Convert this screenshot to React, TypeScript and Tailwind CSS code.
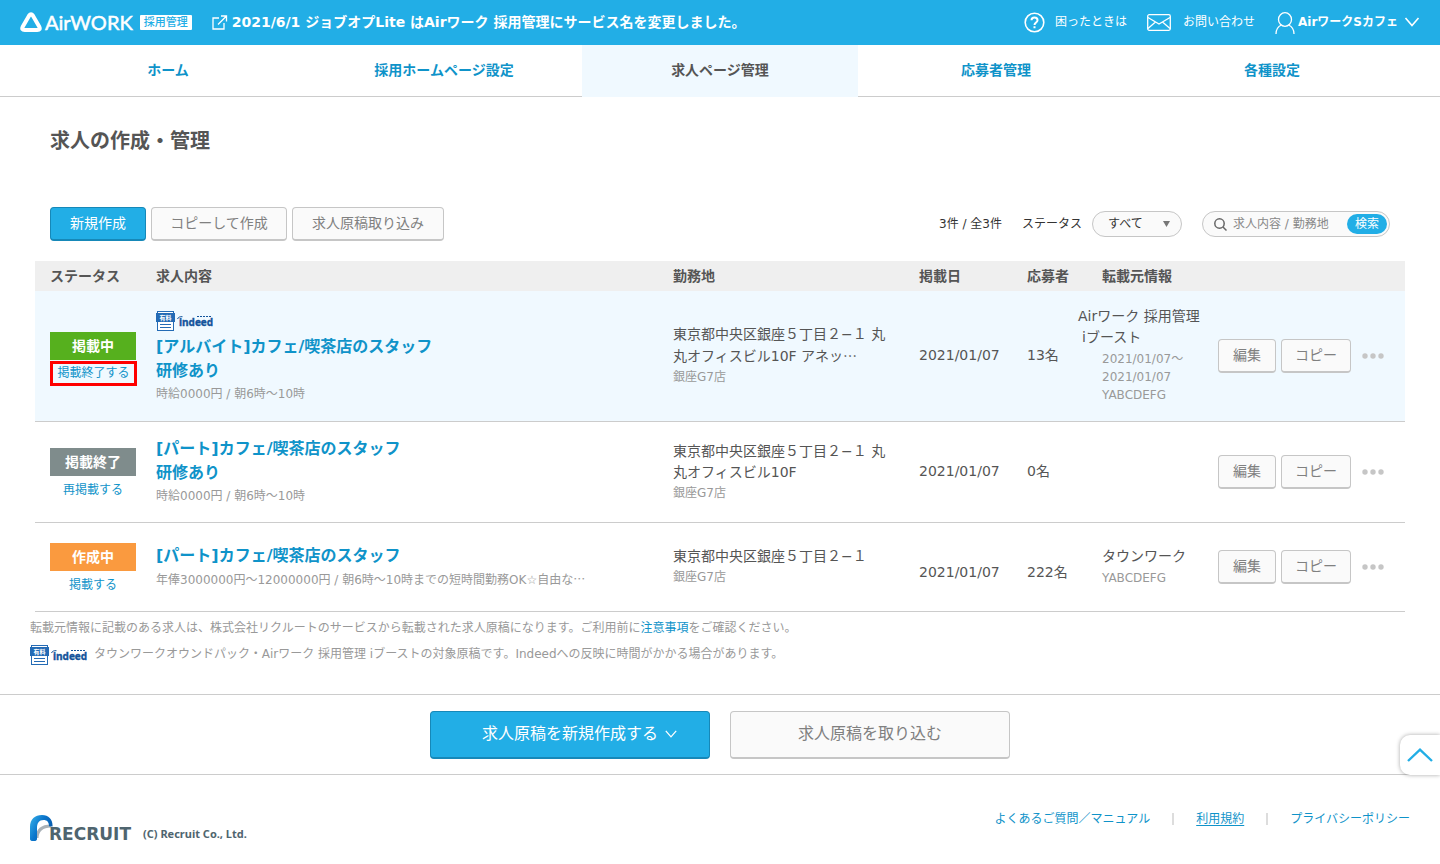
import { clsx } from "clsx";

const navItems = ["ホーム", "採用ホームページ設定", "求人ページ管理", "応募者管理", "各種設定"];

const jobs = [
  {
    id: 1,
    status: "掲載中",
    color: "bg-[#56b01e]",
    action: "掲載終了する",
    highlight: true,
    boosted: true,
    title: ["[アルバイト]カフェ/喫茶店のスタッフ", "研修あり"],
    detail: "時給0000円 / 朝6時～10時",
    address: ["東京都中央区銀座５丁目２−１ 丸", "丸オフィスビル10F アネッ"],
    truncated: true,
    shop: "銀座G7店",
    date: "2021/01/07",
    applicants: "13名",
    source: ["Airワーク 採用管理", "iブースト"],
    sourceInfo: ["2021/01/07～", "2021/01/07", "YABCDEFG"],
  },
  {
    id: 2,
    status: "掲載終了",
    color: "bg-[#7f8c8c]",
    action: "再掲載する",
    title: ["[パート]カフェ/喫茶店のスタッフ", "研修あり"],
    detail: "時給0000円 / 朝6時～10時",
    address: ["東京都中央区銀座５丁目２−１ 丸", "丸オフィスビル10F"],
    shop: "銀座G7店",
    date: "2021/01/07",
    applicants: "0名",
    source: [],
    sourceInfo: [],
  },
  {
    id: 3,
    status: "作成中",
    color: "bg-[#fa9a3f]",
    action: "掲載する",
    title: ["[パート]カフェ/喫茶店のスタッフ"],
    detail: "年俸3000000円～12000000円 / 朝6時～10時までの短時間勤務OK☆自由な",
    detailTruncated: true,
    address: ["東京都中央区銀座５丁目２−１"],
    shop: "銀座G7店",
    date: "2021/01/07",
    applicants: "222名",
    lowered: true,
    source: ["タウンワーク"],
    sourceInfo: ["YABCDEFG"],
  },
];

const grayButton =
  "rounded border border-b-2 border-[#c6c6c6] bg-[#fafafa] pb-px text-[#808080] cursor-pointer";
const blueButton =
  "rounded border border-b-2 border-[#1688b8] bg-[#22aee6] pb-px text-white cursor-pointer";

function Ellipsis() {
  return <span className="font-['Noto_Sans_CJK_JP',sans-serif]">…</span>;
}

function IndeedMark() {
  return (
    <svg className="block shrink-0" width="59" height="20" viewBox="0 0 59 20" role="img" aria-label="有料 indeed">
      <rect x="1.5" y="0.5" width="16" height="19" fill="#fff" stroke="#246bb5" />
      <rect x="0" y="2" width="19" height="9" fill="#246bb5" />
      <text x="9.5" y="9" textAnchor="middle" fontSize="6" fontWeight="700" fill="#fff" fontFamily="Noto Sans CJK JP, sans-serif">有料</text>
      <path d="M4 13.5h11M4 16.5h11" stroke="#246bb5" />
      <path d="M21.5 8c.7-1.800 2.500-2.600 5-2.300" fill="none" stroke="#14549b" />
      <text x="23" y="15" fontSize="10" fontWeight="700" stroke="#14549b" strokeWidth=".4" fill="#14549b" fontFamily="Open Sans, sans-serif">indeed</text>
      <path d="M41 5.5h14" stroke="#14549b" strokeDasharray="2 1" />
    </svg>
  );
}

function Chevron({ className }: { className?: string }) {
  return (
    <svg className={className} width="16" height="10" viewBox="0 0 16 10" fill="none" stroke="currentColor" strokeWidth="1.6">
      <path d="m1.5 1 6.5 7.5L14.5 1" />
    </svg>
  );
}

function Header() {
  return (
    <header className="flex h-[45px] items-center bg-[#22aee6] px-5 pb-px text-white">
      <a href="#" className="flex items-center">
        <svg className="mt-px" width="22" height="21" viewBox="0 0 22 21" fill="none" stroke="currentColor" strokeWidth="4" strokeLinejoin="round">
          <path d="M9.2 3.5Q11 .9 12.8 3.5l6.5 11.3q1.5 3.2-2 3.2H4.7q-3.5 0-2-3.2Z" />
        </svg>
        <span className="ml-[3px] font-[Lato,sans-serif] text-[20px] leading-6 [-webkit-text-stroke:0.5px]">AirWORK</span>
        <span className="ml-[7px] mt-px rounded-[1px] bg-white px-1 text-[11px] leading-[15px] font-medium text-[#22aee6]">採用管理</span>
      </a>
      <a href="#" className="ml-5 flex items-center gap-1 text-sm font-bold">
        <svg width="16" height="15" viewBox="0 0 16 15" fill="none" stroke="currentColor" strokeWidth="1.3">
          <path d="M7 3H1v11h11V8M9 1h5.5v5.5M14.5 1 6 9.5" />
        </svg>
        2021/6/1 ジョブオプLite はAirワーク 採用管理にサービス名を変更しました。
      </a>
      <div className="ml-auto flex items-center text-xs">
        <a href="#" className="flex items-center gap-2.5">
          <svg width="21" height="21" viewBox="0 0 21 21" fill="none" stroke="currentColor" strokeWidth="1.6">
            <circle cx="10.5" cy="10.5" r="9.3" />
            <path d="M7.5 8.3c0-3.600 6-3.600 6 0 0 2.200-3 2.200-3 4.700M10.500 14.300v2" strokeWidth="2" />
          </svg>
          困ったときは
        </a>
        <a href="#" className="ml-5 flex items-center gap-3">
          <svg width="24" height="17" viewBox="0 0 24 17" fill="none" stroke="currentColor" strokeWidth="1.3">
            <rect x=".7" y=".7" width="22.6" height="15.6" rx="1.5" />
            <path d="m1 3.5 11 6.5 11-6.5M1 14.5 8.5 8M23 14.5 15.5 8" />
          </svg>
          お問い合わせ
        </a>
        <button className="ml-5 flex cursor-pointer items-center font-bold">
          <svg className="mr-[3px] mt-px" width="20" height="22" viewBox="0 0 20 22" fill="none" stroke="currentColor" strokeWidth="1.3">
            <ellipse cx="10" cy="7.5" rx="6.5" ry="6.8" />
            <path d="M1 22c0-4.500 2-7.500 5.500-9M19 22c0-4.500-2-7.500-5.500-9" />
          </svg>
          AirワークSカフェ
          <Chevron className="ml-1.5" />
        </button>
      </div>
    </header>
  );
}

function JobTable() {
  return (
    <table className="w-full table-fixed text-left text-sm text-[#555]">
      <colgroup>
        <col className="w-[121px]" />
        <col />
        <col className="w-[246px]" />
        <col className="w-[108px]" />
        <col className="w-[75px]" />
        <col className="w-[116px]" />
        <col className="w-[187px]" />
      </colgroup>
      <thead className="bg-[#efefef]">
        <tr className="h-[30px] leading-5">
          <th className="pl-[15px]">ステータス</th>
          <th>求人内容</th>
          <th>勤務地</th>
          <th>掲載日</th>
          <th>応募者</th>
          <th>転載元情報</th>
          <th aria-label="操作" />
        </tr>
      </thead>
      <tbody>
        {jobs.map((job) => (
          <tr key={job.id} className={clsx("border-b border-[#ccc] leading-[21px]", job.highlight && "bg-[#f0f9ff]")}>
            <td className="pt-5 pb-3.5 pl-[15px]">
              <div className={clsx("w-[86px] text-center font-bold leading-7 text-white", job.color)}>{job.status}</div>
              <a
                href="#"
                className={clsx(
                  "block text-center text-xs text-[#0f93c9]",
                  job.highlight ? "mt-px w-[87px] border-3 border-[red] leading-[19px]" : "mt-0.5 w-[86px] leading-6"
                )}
              >
                {job.action}
              </a>
            </td>
            <td className="py-[15px]">
              {job.boosted && (
                <div className="py-1">
                  <IndeedMark />
                </div>
              )}
              <a href="#" className="block text-base leading-6 font-bold text-[#0f93c9]">
                {job.title.map((line) => (
                  <span key={line} className="block">{line}</span>
                ))}
              </a>
              <p className="text-xs leading-[22px] text-[#999]">
                {job.detail}
                {job.detailTruncated && <Ellipsis />}
              </p>
            </td>
            <td className="py-[15px]">
              {job.address.map((line, i) => (
                <p key={line}>
                  {line}
                  {job.truncated && i === 1 && <Ellipsis />}
                </p>
              ))}
              <p className="text-xs leading-[21px] text-[#999]">{job.shop}</p>
            </td>
            <td className={clsx(job.lowered ? "pt-2.5" : "pb-0.5")}>{job.date}</td>
            <td className={clsx(job.lowered ? "pt-2.5" : "pb-0.5")}>{job.applicants}</td>
            <td className="py-[15px] whitespace-nowrap">
              {job.source.map((line, i) => (
                <p key={line} className={clsx(job.source.length > 1 && (i === 0 ? "-ml-6" : "-ml-5"))}>{line}</p>
              ))}
              <div className="my-0.5 text-xs leading-[18px] text-[#999]">
                {job.sourceInfo.map((line) => (
                  <p key={line}>{line}</p>
                ))}
              </div>
            </td>
            <td>
              <div className="flex items-center">
                <button className={clsx(grayButton, "h-[34px] w-[58px]")}>編集</button>
                <button className={clsx(grayButton, "ml-[5px] h-[34px] w-[70px]")}>コピー</button>
                <button className="ml-[11px] cursor-pointer" aria-label="その他">
                  <svg width="22" height="6" viewBox="0 0 22 6" fill="#c6c6c6">
                    <circle cx="3" cy="3" r="2.7" />
                    <circle cx="11" cy="3" r="2.7" />
                    <circle cx="19" cy="3" r="2.7" />
                  </svg>
                </button>
              </div>
            </td>
          </tr>
        ))}
      </tbody>
    </table>
  );
}

export default function App() {
  return (
    <div className="min-h-screen bg-white font-['DejaVu_Sans','Noto_Sans_CJK_JP',sans-serif] text-[#555]">
      <Header />
      <nav className="grid grid-cols-5 border-b border-[#ccc] px-[30px] text-center text-sm leading-[50px] font-bold text-[#0f93c9]">
        {navItems.map((item, i) => (
          <a key={item} href="#" className={clsx("pb-px", i === 2 && "-mb-px bg-[#f0f9ff] text-[#555]")}>
            {item}
          </a>
        ))}
      </nav>

      <main className="px-[35px]">
        <h1 className="px-[15px] pt-7 text-xl leading-8 font-bold">求人の作成・管理</h1>

        <div className="mt-[50px] mb-5 flex items-center px-[15px]">
          <div className="flex gap-[5px] text-sm">
            <button className={clsx(blueButton, "h-[34px] w-24")}>新規作成</button>
            <button className={clsx(grayButton, "h-[34px] w-34")}>コピーして作成</button>
            <button className={clsx(grayButton, "h-[34px] w-38")}>求人原稿取り込み</button>
          </div>
          <div className="ml-auto flex items-center text-xs text-[#333]">
            <span>3件 / 全3件</span>
            <label htmlFor="status" className="ml-5">ステータス</label>
            <div className="relative ml-2.5">
              <select id="status" className="h-[26px] w-[90px] appearance-none rounded-full border border-[#c6c6c6] bg-[#fafafa] pl-[15px]">
                <option>すべて</option>
              </select>
              <svg className="pointer-events-none absolute top-[10px] right-3" width="7" height="6" viewBox="0 0 7 6" fill="#777">
                <path d="M0 0h7L3.5 6Z" />
              </svg>
            </div>
            <form className="ml-5 flex h-[26px] w-[188px] items-center rounded-full border border-[#c6c6c6] bg-[#fafafa] pr-0.5 pl-[11px]">
              <svg className="shrink-0" width="13" height="13" viewBox="0 0 13 13" fill="none" stroke="#666" strokeWidth="1.5">
                <circle cx="5.5" cy="5.5" r="4.7" />
                <path d="m9 9 3.5 3.5" />
              </svg>
              <input aria-label="求人内容 / 勤務地" placeholder="求人内容 / 勤務地" className="ml-1.5 min-w-0 flex-1 outline-none placeholder:text-[#888]" />
              <button type="button" className="h-5 w-10 shrink-0 cursor-pointer rounded-full bg-[#22aee6] text-white">検索</button>
            </form>
          </div>
        </div>

        <JobTable />
      </main>

      <div className="px-[30px] pt-[5px] pb-7 text-xs text-[#999]">
        <p className="leading-[22px]">
          転載元情報に記載のある求人は、株式会社リクルートのサービスから転載された求人原稿になります。ご利用前に
          <a href="#" className="text-[#0f93c9]">注意事項</a>をご確認ください。
        </p>
        <p className="mt-1 flex items-center gap-[5px] leading-[23px]">
          <IndeedMark />
          タウンワークオウンドパック・Airワーク 採用管理 iブーストの対象原稿です。Indeedへの反映に時間がかかる場合があります。
        </p>
      </div>

      <div className="relative flex justify-center gap-5 border-y border-[#ccc] pt-4 pb-[15px]">
        <button className={clsx(blueButton, "flex h-12 w-70 items-center justify-center gap-1.5 pl-5")}>
          求人原稿を新規作成する
          <Chevron className="h-2 w-3.5" />
        </button>
        <button className={clsx(grayButton, "h-12 w-70")}>求人原稿を取り込む</button>
        <button
          aria-label="ページの先頭へ"
          className="absolute right-0 -bottom-px flex h-10 w-10 cursor-pointer items-center justify-center rounded-l-[10px] bg-white text-[#22aee6] shadow-[0_0_4px_rgba(0,0,0,0.35)]"
        >
          <svg width="26" height="14" viewBox="0 0 26 14" fill="none" stroke="currentColor" strokeWidth="2.4">
            <path d="M1 13 13 1.700 25 13" />
          </svg>
        </button>
      </div>

      <footer className="flex items-start justify-between px-[30px] pt-8">
        <div className="flex items-end pt-2">
          <svg width="23" height="26" viewBox="0 0 23 26">
            <defs>
              <linearGradient id="recruit" x1="0" y1="0" x2="1" y2=".6">
                <stop offset="0" stopColor="#39b4ea" />
                <stop offset=".5" stopColor="#0a76cc" />
                <stop offset="1" stopColor="#0757a8" />
              </linearGradient>
            </defs>
            <path d="M7 23c.3-7 4.500-12 14-12" fill="none" stroke="#a9b1b7" strokeWidth="3" />
            <path d="M0 24V12C0 4 5 0 12 0s11 5 10.500 11.500L19 11.300C19 7 17 5 13.500 5 9 5 7 8 7 13v11c0 3-7 3-7 0Z" fill="url(#recruit)" />
          </svg>
          <span className="-ml-1 text-[17px] leading-[14px] font-bold text-[#4f656f]">RECRUIT</span>
          <small className="ml-3 font-['Noto_Sans',sans-serif] text-[11px] leading-[14px] font-bold text-[#4f656f]">(C) Recruit Co., Ltd.</small>
        </div>
        <ul className="flex items-center text-xs leading-6 text-[#0f93c9]">
          <li><a href="#">よくあるご質問／マニュアル</a></li>
          <li className="ml-[22px] border-l-2 border-[#ddd] pl-[22px] leading-3"><a href="#" className="underline underline-offset-2">利用規約</a></li>
          <li className="ml-[22px] border-l-2 border-[#ddd] pl-[22px] leading-3"><a href="#">プライバシーポリシー</a></li>
        </ul>
      </footer>
    </div>
  );
}
